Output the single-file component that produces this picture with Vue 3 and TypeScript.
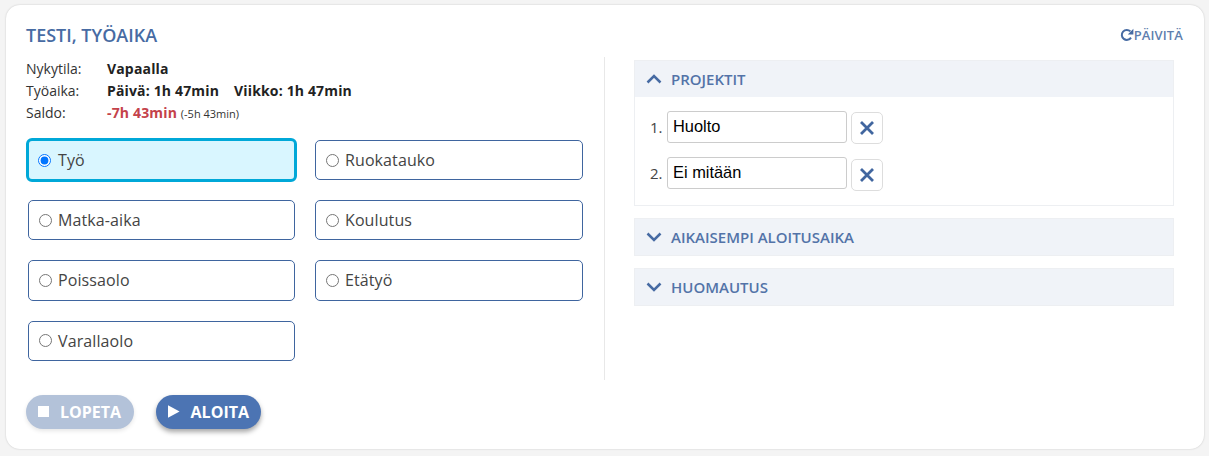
<script setup lang="ts">
const options: string[] = ['Työ', 'Ruokatauko', 'Matka-aika', 'Koulutus', 'Poissaolo', 'Etätyö', 'Varallaolo']
const projects: string[] = ['Huolto', 'Ei mitään']
</script>

<template>
  <div class="page">
    <main class="card">
      <header class="head">
        <h1>TESTI, TYÖAIKA</h1>
        <button class="refresh" type="button">
          <svg width="14" height="14" viewBox="0 0 14 14" aria-hidden="true">
            <path d="M11 9.6A5 5 0 1 1 10.4 3.4" fill="none" stroke="#476ba3" stroke-width="2" />
            <path d="M13.4 0.8V6.4H7.8Z" fill="#476ba3" />
          </svg>
          <span>PÄIVITÄ</span>
        </button>
      </header>
      <div class="columns">
        <section class="left">
          <dl class="stats">
            <dt>Nykytila:</dt>
            <dd><b>Vapaalla</b></dd>
            <dt>Työaika:</dt>
            <dd><b class="day">Päivä: 1h 47min</b><b>Viikko: 1h 47min</b></dd>
            <dt>Saldo:</dt>
            <dd><b class="red">-7h 43min</b> <small>(-5h 43min)</small></dd>
          </dl>
          <div class="options">
            <label v-for="(o, i) in options" :key="o" class="option" :class="{ active: i === 0 }">
              <input type="radio" name="state" :checked="i === 0" />
              <span>{{ o }}</span>
            </label>
          </div>
        </section>
        <section class="right">
          <div class="acc-head first">
            <svg class="chev" width="16" height="10" viewBox="0 0 16 10"><path d="M1.5 8.500L8 2l6.500 6.500" /></svg>
            <span>PROJEKTIT</span>
          </div>
          <div class="acc-body">
            <div v-for="(p, i) in projects" :key="p" class="proj">
              <span class="num">{{ i + 1 }}.</span>
              <input class="text" type="text" :value="p" />
              <button class="del" type="button" aria-label="Poista">
                <svg width="16" height="16" viewBox="0 0 16 16"><path d="M2 2l12 12M14 2L2 14" /></svg>
              </button>
            </div>
          </div>
          <div class="acc-head">
            <svg class="chev" width="16" height="10" viewBox="0 0 16 10"><path d="M1.5 1.500L8 8l6.500-6.500" /></svg>
            <span>AIKAISEMPI ALOITUSAIKA</span>
          </div>
          <div class="acc-head">
            <svg class="chev" width="16" height="10" viewBox="0 0 16 10"><path d="M1.5 1.500L8 8l6.500-6.500" /></svg>
            <span>HUOMAUTUS</span>
          </div>
        </section>
      </div>
      <footer class="actions">
        <button class="pill stop" type="button">
          <svg width="11" height="11" viewBox="0 0 11 11"><rect width="11" height="11" fill="#fff" /></svg>
          <span>LOPETA</span>
        </button>
        <button class="pill start" type="button">
          <svg width="12" height="13" viewBox="0 0 12 13"><path d="M0 0L12 6.500L0 13Z" fill="#fff" /></svg>
          <span>ALOITA</span>
        </button>
      </footer>
    </main>
  </div>
</template>

<style>
html, body { margin: 0; background: #f4f4f4; }
</style>

<style scoped>
.page {
  width: 1209px;
  height: 456px;
  padding: 5px 5px 7px 6px;
  box-sizing: border-box;
  font-family: "Open Sans", sans-serif;
  color: #333;
}
.card {
  height: 444px;
  box-sizing: border-box;
  background: #fff;
  border-radius: 14px;
  box-shadow: 0 0 2px rgba(0, 0, 0, 0.2);
  padding: 18px 20px 0;
}
.head {
  display: flex;
  justify-content: space-between;
  align-items: center;
  height: 24px;
}
h1 {
  margin: 0;
  font-size: 18px;
  font-weight: 600;
  color: #476ba3;
}
.refresh {
  display: flex;
  align-items: center;
  gap: 0;
  padding: 0;
  border: 0;
  background: none;
  font: 600 13px "Open Sans", sans-serif;
  letter-spacing: 0.1px;
  color: #5f7fae;
  margin-right: 1px;
}
.columns {
  display: flex;
  margin-top: 10px;
  height: 323px;
}
.left {
  width: 579px;
  border-right: 1px solid #e8e8e8;
  box-sizing: border-box;
}
.stats {
  display: grid;
  grid-template-columns: 81px 1fr;
  grid-auto-rows: 22px;
  align-items: center;
  margin: 0;
  font-size: 14px;
}
.stats dt { color: #333; }
.stats dd { margin: 0; letter-spacing: 0.16px; }
.stats b { font-weight: 700; color: #222; }
.stats .day { margin-right: 15px; }
.stats .red { color: #c4424a; }
.stats small { font-size: 11px; color: #333; letter-spacing: 0; }
.options {
  display: grid;
  grid-template-columns: 267px 268px;
  grid-auto-rows: 40.2px;
  column-gap: 20px;
  row-gap: 20px;
  margin: 17px 0 0 2px;
}
.option {
  display: flex;
  align-items: center;
  gap: 6px;
  padding-left: 10px;
  box-sizing: border-box;
  border: 1px solid #3f659f;
  border-radius: 5px;
  font-size: 16px;
  letter-spacing: 0.1px;
  color: #444;
  background: #fff;
}
.option input { margin: 0; width: 13px; height: 13px; }
.option.active {
  background: #d9f6ff;
  border: 3px solid #00a8d8;
  border-radius: 6px;
  margin: -2px;
  padding-left: 9px;
  gap: 7px;
}
.right {
  width: 540px;
  margin-left: 29px;
  margin-top: 3px;
}
.acc-head {
  display: flex;
  align-items: center;
  gap: 9px;
  height: 36px;
  padding-left: 11px;
  margin-top: 12px;
  background: #f0f3f8;
  border: 1px solid #edeff2;
  font-size: 15px;
  font-weight: 600;
  color: #5373a8;
}
.acc-head.first { margin-top: 0; border-bottom: 0; }
.chev path {
  fill: none;
  stroke: #476ba3;
  stroke-width: 2.500;
}
.acc-body {
  border: 1px solid #edeff2;
  border-top: 0;
  height: 109px;
  padding-top: 13px;
  box-sizing: border-box;
}
.proj {
  display: flex;
  align-items: flex-start;
  height: 34px;
  margin-bottom: 12px;
  padding-left: 15px;
}
.num { font-size: 15px; line-height: 34px; color: #444; width: 17px; }
.text {
  width: 180px;
  height: 32px;
  margin-top: 1px;
  box-sizing: border-box;
  border: 1px solid #ccc;
  border-radius: 3px;
  padding: 0 5px 2px;
  font: 16.4px "Liberation Sans", sans-serif;
  color: #000;
}
.del {
  display: flex;
  align-items: center;
  justify-content: center;
  width: 32px;
  height: 32px;
  margin: 2px 0 0 4px;
  padding: 0;
  border: 1px solid #ddd;
  border-radius: 5px;
  background: #fff;
}
.proj:last-child .del { margin-top: 3px; }
.del path { fill: none; stroke: #41669f; stroke-width: 2.800; }
.actions {
  display: flex;
  gap: 22px;
  margin-top: 15px;
}
.pill {
  display: flex;
  align-items: center;
  height: 34px;
  border: 0;
  border-radius: 17px;
  padding: 0 12px;
  font: 700 16px "Open Sans", sans-serif;
  color: #fff;
  background: #4c74b3;
}
.pill svg { margin-bottom: 2px; }
.stop {
  width: 108px;
  gap: 11px;
  background: #b3c2d9;
  box-shadow: 0 2px 4px rgba(0, 0, 0, 0.1);
}
.start {
  width: 105px;
  gap: 11px;
  box-shadow: 0 3px 5px rgba(0, 0, 0, 0.35);
}
</style>
